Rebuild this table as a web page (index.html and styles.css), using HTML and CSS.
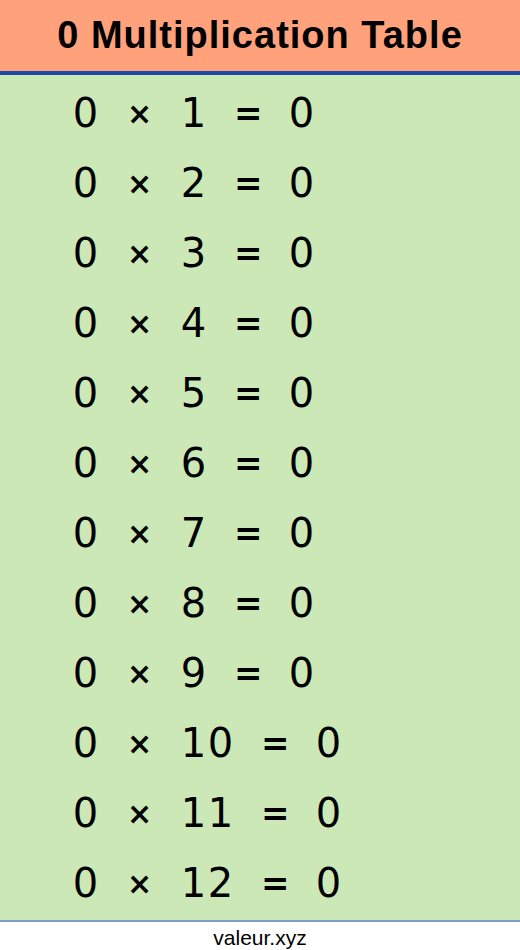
FILE: index.html
```html
<!DOCTYPE html>
<html lang="en">
<head>
<meta charset="utf-8">
<title>0 Multiplication Table</title>
<link rel="stylesheet" href="styles.css">
</head>
<body>
<div class="page">
  <header class="title-bar"><h1 class="title">0 Multiplication Table</h1></header>
  <main class="table">
    <div class="row"><span class="c">0</span><span class="c"> </span><span class="c op">×</span><span class="c"> </span><span class="c">1</span><span class="c"> </span><span class="c eq">=</span><span class="c"> </span><span class="c">0</span></div>
    <div class="row"><span class="c">0</span><span class="c"> </span><span class="c op">×</span><span class="c"> </span><span class="c">2</span><span class="c"> </span><span class="c eq">=</span><span class="c"> </span><span class="c">0</span></div>
    <div class="row"><span class="c">0</span><span class="c"> </span><span class="c op">×</span><span class="c"> </span><span class="c">3</span><span class="c"> </span><span class="c eq">=</span><span class="c"> </span><span class="c">0</span></div>
    <div class="row"><span class="c">0</span><span class="c"> </span><span class="c op">×</span><span class="c"> </span><span class="c">4</span><span class="c"> </span><span class="c eq">=</span><span class="c"> </span><span class="c">0</span></div>
    <div class="row"><span class="c">0</span><span class="c"> </span><span class="c op">×</span><span class="c"> </span><span class="c">5</span><span class="c"> </span><span class="c eq">=</span><span class="c"> </span><span class="c">0</span></div>
    <div class="row"><span class="c">0</span><span class="c"> </span><span class="c op">×</span><span class="c"> </span><span class="c">6</span><span class="c"> </span><span class="c eq">=</span><span class="c"> </span><span class="c">0</span></div>
    <div class="row"><span class="c">0</span><span class="c"> </span><span class="c op">×</span><span class="c"> </span><span class="c">7</span><span class="c"> </span><span class="c eq">=</span><span class="c"> </span><span class="c">0</span></div>
    <div class="row"><span class="c">0</span><span class="c"> </span><span class="c op">×</span><span class="c"> </span><span class="c">8</span><span class="c"> </span><span class="c eq">=</span><span class="c"> </span><span class="c">0</span></div>
    <div class="row"><span class="c">0</span><span class="c"> </span><span class="c op">×</span><span class="c"> </span><span class="c">9</span><span class="c"> </span><span class="c eq">=</span><span class="c"> </span><span class="c">0</span></div>
    <div class="row"><span class="c">0</span><span class="c"> </span><span class="c op">×</span><span class="c"> </span><span class="c">1</span><span class="c">0</span><span class="c"> </span><span class="c eq">=</span><span class="c"> </span><span class="c">0</span></div>
    <div class="row"><span class="c">0</span><span class="c"> </span><span class="c op">×</span><span class="c"> </span><span class="c">1</span><span class="c">1</span><span class="c"> </span><span class="c eq">=</span><span class="c"> </span><span class="c">0</span></div>
    <div class="row"><span class="c">0</span><span class="c"> </span><span class="c op">×</span><span class="c"> </span><span class="c">1</span><span class="c">2</span><span class="c"> </span><span class="c eq">=</span><span class="c"> </span><span class="c">0</span></div>
  </main>
  <footer class="footer">valeur.xyz</footer>
</div>
</body>
</html>
```
FILE: styles.css
```css
html, body {
  margin: 0;
  padding: 0;
  background: #ffffff;
}
.page {
  width: 520px;
  display: flex;
  flex-direction: column;
}
.title-bar {
  background: #ffa27c;
  height: 71px;
  border-bottom: 4px solid #1b49a5;
  display: flex;
  align-items: center;
  justify-content: center;
}
.title {
  margin: 0;
  font-family: "Liberation Sans", Arial, sans-serif;
  font-weight: bold;
  font-size: 38px;
  letter-spacing: 1px;
  color: #000;
}
.table {
  background: #cce8b6;
  padding: 3px 0 2px 72px;
  border-bottom: 2px solid #7d9ec8;
  display: flex;
  flex-direction: column;
}
.row {
  height: 70px;
  display: flex;
  align-items: center;
  font-family: "DejaVu Sans", sans-serif;
  font-size: 40px;
  color: #000;
}
.c {
  width: 27px;
  flex: none;
  text-align: center;
  white-space: pre;
}
.op {
  font-size: 30px;
  font-weight: bold;
}
.eq {
  font-size: 34px;
  font-weight: bold;
}
.footer {
  text-align: center;
  font-family: "Liberation Sans", Arial, sans-serif;
  font-size: 21px;
  color: #000;
  padding-top: 4px;
}
```
